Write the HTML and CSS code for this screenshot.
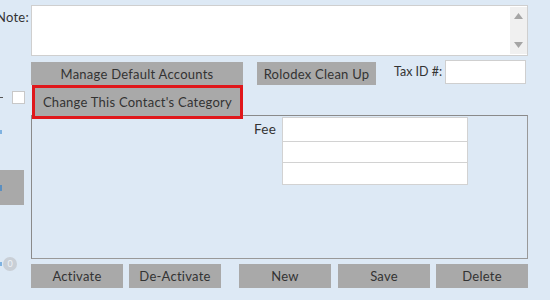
FILE: index.html
```html
<!DOCTYPE html>
<html>
<head>
<meta charset="utf-8">
<link rel="stylesheet" href="styles.css">
</head>
<body>
<div class="page">
  <div class="gutter">
    <div class="note-label"><span>Note:</span></div>
    <div class="check-row"><span class="dash"></span><span class="checkbox"></span></div>
    <div class="blue-dot dot1"></div>
    <div class="side-btn"><span class="side-mark"></span></div>
    <div class="circle-row"><span class="blue-dot"></span><span class="circle">0</span></div>
  </div>
  <div class="main">
    <div class="note-box">
      <div class="note-area"></div>
      <div class="scrollbar">
        <svg width="9" height="6" viewBox="0 0 9 6"><path d="M0 6 L4.5 0 L9 6 Z" fill="#a5a5a5"/></svg>
        <svg width="9" height="6" viewBox="0 0 9 6"><path d="M0 0 L4.5 6 L9 0 Z" fill="#a5a5a5"/></svg>
      </div>
    </div>
    <div class="row2">
      <div class="btn btn-manage">Manage Default Accounts</div>
      <div class="btn btn-rolodex">Rolodex Clean Up</div>
      <div class="tax">
        <span class="tax-label">Tax ID #:</span>
        <div class="tax-input"></div>
      </div>
    </div>
    <div class="btn btn-change">Change This Contact's Category</div>
    <div class="panel">
      <div class="fee-group">
        <span class="fee-label">Fee</span>
        <div class="fee-table">
          <div class="fee-cell c1"></div>
          <div class="fee-cell c2"></div>
          <div class="fee-cell c3"></div>
        </div>
      </div>
    </div>
    <div class="actions">
      <div class="btn act">Activate</div>
      <div class="btn act m1">De-Activate</div>
      <div class="btn act m2">New</div>
      <div class="btn act m3">Save</div>
      <div class="btn act m4">Delete</div>
    </div>
  </div>
</div>
</body>
</html>
```

FILE: styles.css
```css
html, body {
  margin: 0;
  padding: 0;
  background: #dde9f5;
  width: 550px;
  height: 300px;
  overflow: hidden;
  font-family: "Lato", "Noto Sans", sans-serif;
  font-size: 13px;
  letter-spacing: 0.25px;
  color: #333;
}

.page {
  display: flex;
  width: 550px;
  height: 300px;
}

.gutter {
  width: 31px;
  flex: 0 0 31px;
  display: flex;
  flex-direction: column;
}

.note-label {
  width: 29px;
  margin-top: 9px;
  height: 16px;
  display: flex;
  justify-content: flex-end;
  white-space: nowrap;
  font-size: 13px;
}

.check-row {
  margin-top: 66px;
  height: 13px;
  display: flex;
  align-items: center;
}

.dash {
  width: 3px;
  height: 1px;
  background: #555;
}

.checkbox {
  margin-left: 9px;
  width: 11px;
  height: 11px;
  background: #fff;
  border: 1px solid #c8c8c8;
}

.blue-dot {
  width: 2px;
  height: 4px;
  background: #7fb2e0;
}

.dot1 {
  margin-top: 26px;
}

.side-btn {
  margin-top: 36px;
  width: 24px;
  height: 35px;
  background: #a9a9a9;
  display: flex;
  align-items: center;
}

.side-mark {
  width: 2px;
  height: 6px;
  background: #5b8fc0;
}

.circle-row {
  margin-top: 52px;
  display: flex;
  align-items: center;
}

.circle {
  margin-left: 1px;
  width: 14px;
  height: 14px;
  border-radius: 50%;
  background: #c9cfd6;
  color: #eef2f6;
  font-size: 9px;
  letter-spacing: 0;
  line-height: 14px;
  text-align: center;
}

.main {
  width: 497px;
  display: flex;
  flex-direction: column;
}

.note-box {
  margin-top: 5px;
  height: 49px;
  border: 1px solid #cfcfcf;
  background: #fff;
  display: flex;
}

.note-area {
  flex: 1;
}

.scrollbar {
  width: 17px;
  margin: 1px 0;
  background: #f0f0f0;
  display: flex;
  flex-direction: column;
  align-items: center;
  justify-content: space-between;
  padding: 6px 0 6px;
}

.row2 {
  margin-top: 4px;
  display: flex;
  align-items: flex-start;
}

.btn {
  background: #a9a9a9;
  display: flex;
  align-items: center;
  justify-content: center;
  white-space: nowrap;
  color: #333;
}

.btn-manage {
  margin-top: 2px;
  width: 212px;
  height: 23px;
}

.btn-rolodex {
  margin-top: 2px;
  margin-left: 14px;
  width: 119px;
  height: 23px;
}

.tax {
  margin-left: 18px;
  display: flex;
  align-items: center;
}

.tax-label {
  width: 51px;
  margin-top: -2px;
  font-size: 12.5px;
  letter-spacing: 0;
}

.tax-input {
  width: 79px;
  height: 22px;
  background: #fff;
  border: 1px solid #cfcfcf;
}

.btn-change {
  margin-top: 3px;
  margin-left: 4px;
  width: 205px;
  height: 28px;
  outline: 3px solid #e0171b;
  position: relative;
  z-index: 2;
}

.panel {
  margin-top: -1px;
  height: 142px;
  border: 1px solid #8a8a8a;
  border-right-color: #999;
  border-bottom-color: #999;
}

.fee-group {
  margin-top: 1px;
  margin-left: 222px;
  display: flex;
  align-items: flex-start;
}

.fee-label {
  width: 28px;
  margin-top: 4px;
  font-size: 13.5px;
}

.fee-table {
  width: 186px;
  display: flex;
  flex-direction: column;
}

.fee-cell {
  background: #fff;
  border: 1px solid #d2d2d2;
}

.c1 { height: 23px; }
.c2 { height: 20px; border-top: none; }
.c3 { height: 21px; border-top: none; }

.actions {
  margin-top: 5px;
  display: flex;
}

.act {
  width: 92px;
  height: 24px;
}

.m1 { margin-left: 6px; }
.m2 { margin-left: 18px; }
.m3 { margin-left: 7px; }
.m4 { margin-left: 6px; }
```
